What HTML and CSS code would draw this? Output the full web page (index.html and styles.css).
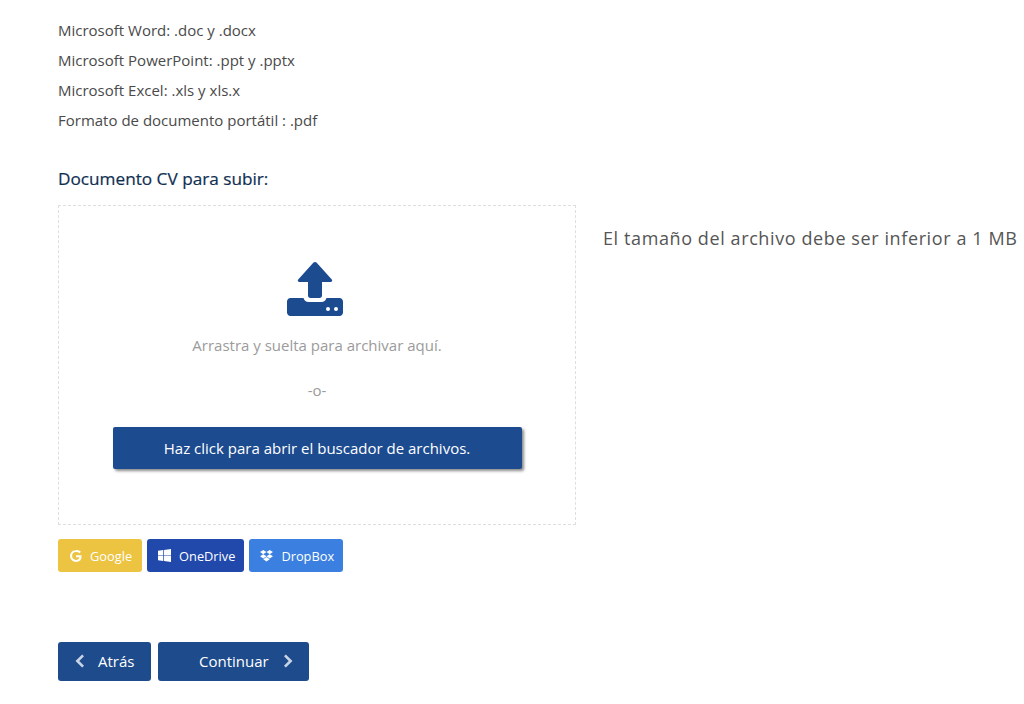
FILE: index.html
```html
<!DOCTYPE html>
<html lang="en">
<head>
    <meta charset="UTF-8">
    <title>Documento CV</title>
    <link rel="stylesheet" href="styles.css">
</head>
<body>
    <ul class="formats">
        <li>Microsoft Word: .doc y .docx</li>
        <li>Microsoft PowerPoint: .ppt y .pptx</li>
        <li>Microsoft Excel: .xls y xls.x</li>
        <li>Formato de documento portátil : .pdf</li>
    </ul>

    <h3 class="upload-title">Documento CV para subir:</h3>

    <div class="upload-row">
        <div class="dropzone">
            <svg class="upload-icon" viewBox="0 0 56 54" width="56" height="54">
                <path fill="#1d4b8f" d="M28 0c.6 0 1.100.2 1.500.6l15.300 17c.9 1 .2 2.400-1.100 2.400H35v13.500c0 1.400-1 2.500-2.400 2.500h-9.200c-1.400 0-2.400-1.100-2.400-2.500V20h-8.700c-1.300 0-2-1.400-1.100-2.400l15.300-17c.4-.4.9-.6 1.500-.6z"/>
                <path fill="#1d4b8f" d="M3.500 36h13c.8 2.500 2.600 4 5 4h13c2.400 0 4.200-1.500 5-4h13c1.900 0 3.500 1.600 3.500 3.500v11c0 1.900-1.600 3.500-3.500 3.500h-49C1.600 54 0 52.400 0 50.500v-11C0 37.600 1.600 36 3.500 36z"/>
                <circle cx="41" cy="47" r="2" fill="#fff"/>
                <circle cx="49" cy="47" r="2" fill="#fff"/>
            </svg>
            <p class="drop-text">Arrastra y suelta para archivar aquí.</p>
            <p class="drop-or">-o-</p>
            <button class="browse-btn">Haz click para abrir el buscador de archivos.</button>
        </div>
        <p class="size-note">El tamaño del archivo debe ser inferior a 1 MB</p>
    </div>

    <div class="sources">
        <a class="source google">
            <svg viewBox="0 0 16 16" width="12" height="12"><path fill="none" stroke="#fff" stroke-width="2.800" d="M13.600 3.400A7 7 0 0 0 8 1.400a6.600 6.600 0 1 0 0 13.200c3.800 0 6-2.600 6-6.200H8"/></svg>
            Google
        </a>
        <a class="source onedrive">
            <svg viewBox="0 0 14 14" width="13" height="13"><path fill="#fff" d="M0 2l5.700-.8v5.400H0zM6.500 1.100L14 0v6.600H6.500zM0 7.400h5.700v5.400L0 12zM6.500 7.400H14V14l-7.500-1.100z"/></svg>
            OneDrive
        </a>
        <a class="source dropbox">
            <svg viewBox="0 0 14 13" width="13" height="12"><path fill="#fff" d="M3.500 0L7 2.300 3.500 4.600 0 2.300zM10.500 0L14 2.300l-3.500 2.300L7 2.300zM0 6.900l3.500-2.300L7 6.900 3.500 9.200zM10.500 4.600L14 6.900l-3.500 2.300L7 6.900zM3.500 10l3.500-2.300L10.500 10 7 12.500z"/></svg>
            DropBox
        </a>
    </div>

    <div class="nav-buttons">
        <button class="nav-btn back">
            <svg viewBox="0 0 10 16" width="10" height="14"><path fill="none" stroke="#c9d5e6" stroke-width="3" d="M8.500 1.500L2 8l6.500 6.500"/></svg>
            Atrás
        </button>
        <button class="nav-btn next">
            Continuar
            <svg viewBox="0 0 10 16" width="10" height="14"><path fill="none" stroke="#c9d5e6" stroke-width="3" d="M1.500 1.500L8 8l-6.500 6.500"/></svg>
        </button>
    </div>
</body>
</html>
```

FILE: styles.css
```css
body {
    margin: 0;
    padding: 15px 0 0 58px;
    background-color: #fff;
    font-family: "Open Sans", sans-serif;
    font-size: 15px;
    color: #4a4a4a;
}
.formats {
    list-style: none;
    margin: 0;
    padding: 0;
}
.formats li {
    line-height: 30px;
}
.upload-title {
    margin: 33px 0 0;
    font-size: 17.2px;
    font-weight: 400;
    line-height: 22px;
    color: #0f2f52;
    -webkit-text-stroke: 0.2px #0f2f52;
}
.upload-row {
    display: flex;
    margin-top: 15px;
}
.dropzone {
    box-sizing: border-box;
    width: 518px;
    height: 320px;
    padding-top: 56px;
    border: 1px dashed #dedede;
    text-align: center;
}
.upload-icon {
    display: block;
    margin-left: 228px;
}
.drop-text {
    margin: 19px 0 0;
    line-height: 20px;
    color: #9b9b9b;
}
.drop-or {
    margin: 25px 0 0;
    line-height: 20px;
    color: #9b9b9b;
}
.browse-btn {
    display: block;
    width: 409px;
    height: 42px;
    margin: 27px auto 0;
    border: 0;
    border-radius: 2px;
    background-color: #1d4b8f;
    box-shadow: 2px 2px 3px #8a8a8a;
    font-family: inherit;
    font-size: 15px;
    font-weight: 500;
    color: #fff;
}
.size-note {
    margin: 21px 0 0 27px;
    font-size: 18px;
    line-height: 24px;
    letter-spacing: 0.6px;
    white-space: nowrap;
    color: #555;
}
.sources {
    display: flex;
    gap: 5px;
    margin-top: 14px;
}
.source {
    display: flex;
    align-items: center;
    gap: 8px;
    box-sizing: border-box;
    height: 33px;
    padding: 0 9px 0 11px;
    border-radius: 3px;
    font-size: 12.8px;
    color: #fff;
}
.google {
    padding: 0 10px 0 12px;
    background-color: #ecc441;
}
.onedrive {
    background-color: #2049ab;
}
.dropbox {
    background-color: #3b7fe0;
}
.nav-buttons {
    display: flex;
    gap: 7px;
    margin-top: 70px;
}
.nav-btn {
    display: flex;
    align-items: center;
    height: 39px;
    border: 0;
    border-radius: 3px;
    background-color: #1d4b8b;
    font-family: inherit;
    font-size: 15px;
    font-weight: 500;
    color: #fff;
}
.back {
    width: 93px;
    padding: 0 0 2px 17px;
    gap: 13px;
}
.next {
    width: 151px;
    padding: 0 0 2px 41px;
    gap: 14px;
}
```
